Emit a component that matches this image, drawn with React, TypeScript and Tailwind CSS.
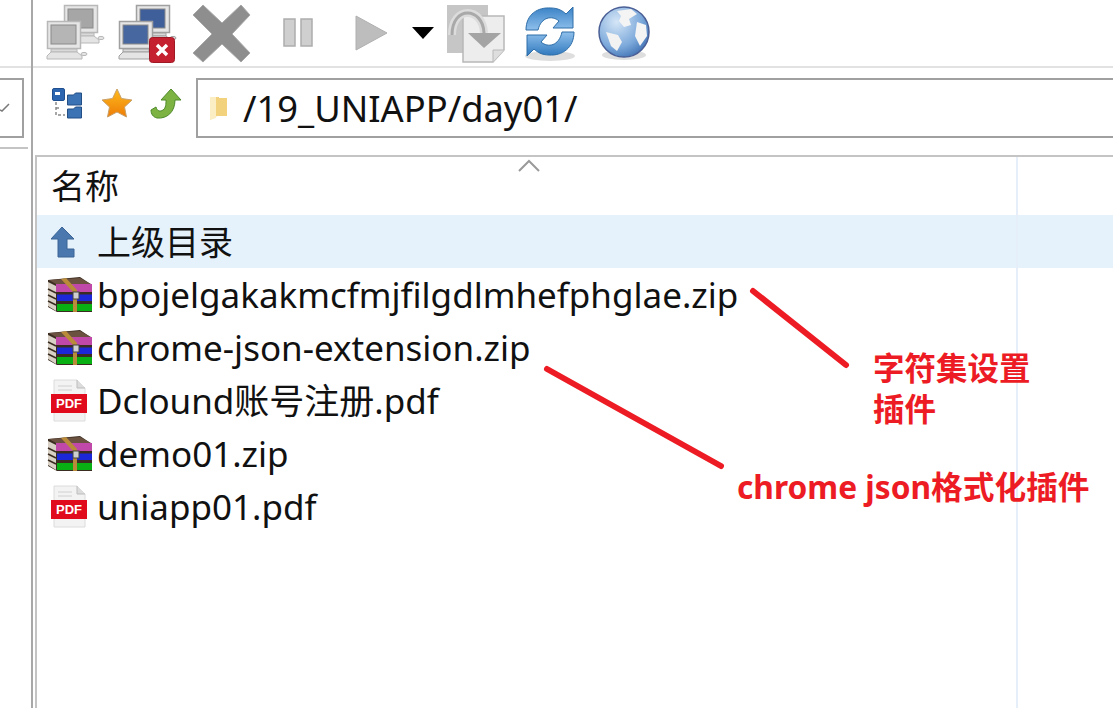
import React from 'react';

const font = "font-['Noto_Sans','Noto_Sans_CJK_SC',sans-serif]";

const Computer = ({ x, y, screen, line }: { x: number; y: number; screen: string; line: string }) => (
    <g transform={`translate(${x} ${y})`}>
        <rect x="0.5" y="0.5" width="33" height="27" fill="#e6e6e6" stroke={line} strokeWidth="1.5" />
        <rect x="4" y="4" width="25" height="19" fill={screen} stroke="#8a8a8a" />
        <path d="M4 28 h26 v3 h-26 z" fill="#d9d9d9" stroke={line} />
        <path d="M0 35 L4 31 H30 L35 35 V38 H0 Z" fill="#e4e4e4" stroke={line} />
        <ellipse cx="37" cy="33" rx="3" ry="1.6" fill="#e4e4e4" stroke={line} />
    </g>
);

const ConnectIcon = () => (
    <svg width="60" height="60" viewBox="0 0 60 60" className="shrink-0">
        <Computer x={19} y={2} screen="#a6a6a6" line="#b8b8b8" />
        <Computer x={2} y={18} screen="#b5b5b5" line="#b8b8b8" />
    </svg>
);

const DisconnectIcon = () => (
    <svg width="60" height="60" viewBox="0 0 60 60" className="shrink-0">
        <Computer x={19} y={2} screen="#3f5f9b" line="#a0a0a0" />
        <Computer x={2} y={18} screen="#46679f" line="#a0a0a0" />
        <rect x="32.5" y="34.5" width="25" height="25" rx="3" fill="#c4202f" stroke="#a11825" />
        <path d="M40 42 L50 52 M50 42 L40 52" stroke="#fff" strokeWidth="3.4" />
    </svg>
);

const CrossIcon = () => (
    <svg width="60" height="60" viewBox="0 0 60 60" className="shrink-0">
        <path d="M11 2 L30 20 L49 2 L58 12 L40 31 L58 50 L49 59 L30 41 L11 59 L1 50 L20 31 L1 12 Z" fill="#8e8e8e" stroke="#a8a8a8" />
    </svg>
);

const PauseIcon = () => (
    <svg width="30" height="30" viewBox="0 0 30 30" className="shrink-0">
        <rect x="1" y="1" width="11" height="27" fill="#cfcfcf" stroke="#adadad" strokeWidth="1.5" />
        <rect x="18" y="1" width="11" height="27" fill="#cfcfcf" stroke="#adadad" strokeWidth="1.5" />
    </svg>
);

const PlayIcon = () => (
    <svg width="34" height="38" viewBox="0 0 34 38" className="shrink-0">
        <path d="M1 2 L32 19 L1 36 Z" fill="#bdbdbd" stroke="#b0b0b0" />
    </svg>
);

const CaretIcon = () => (
    <svg width="22" height="12" viewBox="0 0 22 12" className="shrink-0">
        <path d="M0 0 H22 L11 12 Z" fill="#000" />
    </svg>
);

const PageArrowIcon = () => (
    <svg width="60" height="60" viewBox="0 0 60 60" className="shrink-0">
        <rect x="0" y="2" width="41" height="48" fill="#c6c6c6" />
        <path d="M16 13 h41 v34 l-11 12 h-30 z" fill="#ededed" stroke="#b8b8b8" strokeWidth="1.5" />
        <path d="M46 59 v-12 h11" fill="#dedede" stroke="#b8b8b8" />
        <path d="M5 32 C5 2 36 4 37 30" fill="none" stroke="#dcdcdc" strokeWidth="8" />
        <path d="M5 32 C5 2 36 4 37 30" fill="none" stroke="#a9a9a9" strokeWidth="3" />
        <path d="M21 30 H54 L37 45 Z" fill="#a4a4a4" />
    </svg>
);

const RefreshIcon = () => (
    <svg width="52" height="58" viewBox="0 0 52 58" className="shrink-0">
        <defs>
            <linearGradient id="refreshTop" x1="0" y1="0" x2="0" y2="1">
                <stop offset="0" stopColor="#3a82c6" />
                <stop offset="1" stopColor="#8fc0ec" />
            </linearGradient>
            <linearGradient id="refreshBottom" x1="0" y1="0" x2="0" y2="1">
                <stop offset="0" stopColor="#8fc0ec" />
                <stop offset="1" stopColor="#2f78bd" />
            </linearGradient>
        </defs>
        <ellipse cx="26" cy="52" rx="25" ry="5" fill="#dedede" />
        <path d="M2 26 C2 10 14 3 27 4 C34 4 39 7 42 10 L49 3 V24 H29 L35 17 C28 11 17 13 14 26 Z" fill="url(#refreshTop)" stroke="#2f6ea8" />
        <path d="M50 28 C50 44 38 52 25 51 C18 51 13 48 10 45 L3 52 V31 H23 L17 38 C24 44 35 42 38 28 Z" fill="url(#refreshBottom)" stroke="#2f6ea8" />
    </svg>
);

const GlobeIcon = () => (
    <svg width="54" height="56" viewBox="0 0 54 56" className="shrink-0">
        <defs>
            <radialGradient id="globeFill" cx="0.35" cy="0.3" r="0.85">
                <stop offset="0" stopColor="#d5e6f7" />
                <stop offset="0.6" stopColor="#7ba8da" />
                <stop offset="1" stopColor="#2f62a8" />
            </radialGradient>
        </defs>
        <ellipse cx="27" cy="50" rx="22" ry="5" fill="#dedede" />
        <circle cx="27" cy="27" r="25" fill="url(#globeFill)" stroke="#4a5f96" strokeWidth="1.5" />
        <path d="M20 6 L34 4 L40 9 L32 14 L34 20 L27 22 L22 16 L24 11 Z" fill="#f4f4f4" />
        <path d="M40 17 L49 20 L50 31 L43 41 L38 31 Z" fill="#f4f4f4" />
        <path d="M9 27 L21 30 L25 37 L20 46 L14 41 Z" fill="#f2f2f2" />
    </svg>
);

const TreeIcon = () => (
    <svg width="32" height="32" viewBox="0 0 32 32" className="shrink-0">
        <path d="M4 14 V27 H13 M4 20 H8" fill="none" stroke="#8a8a8a" strokeWidth="1.5" strokeDasharray="3 2" />
        <rect x="0.5" y="0.5" width="12" height="12" rx="1.5" fill="#2c66b0" stroke="#1f4f8f" />
        <rect x="3" y="4" width="5" height="3" fill="#fff" />
        <path d="M15.5 7 h6 l2 -2 h6 v12 h-14 z" fill="#3b73b5" stroke="#234f85" />
        <path d="M15.5 21 h6 l2 -2 h6 v11 h-14 z" fill="#3b73b5" stroke="#234f85" />
    </svg>
);

const StarIcon = () => (
    <svg width="32" height="30" viewBox="0 0 32 30" className="shrink-0">
        <defs>
            <linearGradient id="starFill" x1="0" y1="0" x2="0" y2="1">
                <stop offset="0" stopColor="#fdbb1e" />
                <stop offset="1" stopColor="#ee7c06" />
            </linearGradient>
        </defs>
        <path d="M16 1 L20.5 10.5 L31 12 L23.5 19 L25.5 29 L16 24 L6.5 29 L8.5 19 L1 12 L11.5 10.5 Z" fill="url(#starFill)" stroke="#c9a069" />
    </svg>
);

const BackIcon = () => (
    <svg width="32" height="32" viewBox="0 0 32 32" className="shrink-0">
        <path d="M21 1 L31 12 H25 C25 24 17 31 7 30 C3 29 1 26 1 22 L6 19 C7 23 10 24 13 22 C16 20 16 16 16 12 H11 Z" fill="#7cb342" stroke="#4e8a2a" />
    </svg>
);

const ChevronIcon = () => (
    <svg width="10" height="10" viewBox="0 0 10 10" className="shrink-0">
        <path d="M0 8 L2 9 L9 2" fill="none" stroke="#7a7a7a" strokeWidth="1.5" />
    </svg>
);

const FolderIcon = () => (
    <svg width="20" height="26" viewBox="0 0 20 26" className="shrink-0">
        <path d="M1 2 H10 V3 H18 V21 H8 L1 25 Z" fill="#f3d27e" />
        <path d="M1 2 H7 V23 L1 25 Z" fill="#fbeec5" />
    </svg>
);

const UpIcon = () => (
    <svg width="24" height="32" viewBox="0 0 24 32" className="shrink-0">
        <path d="M11 1 L23 13 H16 V23 H23 V31 H7 V13 H0 Z" fill="#4a78ae" stroke="#3a6496" />
    </svg>
);

const ZipIcon = () => (
    <svg width="46" height="36" viewBox="0 0 46 36" className="shrink-0">
        <path d="M1 3 L33 0 L45 8 V35 H10 L1 30 Z" fill="#3a2c20" />
        <rect x="9" y="7" width="36" height="8" fill="#c048a8" />
        <path d="M2 3 L33 1 L44 7 H9 Z" fill="#6b5140" />
        <rect x="10" y="17.5" width="35" height="6.5" fill="#1c28d8" />
        <rect x="10" y="27" width="35" height="7" fill="#08b014" />
        <path d="M1 5 L9 9 V34 L1 29 Z" fill="#d8d0c4" />
        <path d="M1 12 L9 16 M1 18 L9 22 M1 24 L9 28" stroke="#3a2c20" strokeWidth="1.5" />
        <path d="M14 2 L19 1 L30 13 V35 H26 V15 Z" fill="#b98a3a" />
        <rect x="26" y="15" width="6" height="7" fill="#cfcfcf" stroke="#444" />
    </svg>
);

const PdfIcon = () => (
    <svg width="38" height="44" viewBox="0 0 38 44" className="shrink-0">
        <path d="M3 1 H26 L34 9 V42 H3 Z" fill="#f3f3f3" stroke="#dcdcdc" />
        <path d="M26 1 V9 H34" fill="#dcdcdc" stroke="#bdbdbd" />
        <path d="M7 7 H21 M7 11 H21" stroke="#d0d0d0" />
        <rect x="0" y="15" width="36" height="19" fill="#e00b1c" />
        <text x="18" y="29" textAnchor="middle" fontSize="13" fontWeight="700" fill="#fff" fontFamily="Liberation Sans, sans-serif">PDF</text>
    </svg>
);

const rows: { name: string; icon: 'zip' | 'pdf' }[] = [
    { name: 'bpojelgakakmcfmjfilgdlmhefphglae.zip', icon: 'zip' },
    { name: 'chrome-json-extension.zip', icon: 'zip' },
    { name: 'Dclound账号注册.pdf', icon: 'pdf' },
    { name: 'demo01.zip', icon: 'zip' },
    { name: 'uniapp01.pdf', icon: 'pdf' },
];

export default function App() {
    return (
        <div className={`relative flex h-[708px] w-[1113px] overflow-hidden bg-white text-[#111] ${font}`}>
            {/* collapsed left pane */}
            <div className="flex w-[31px] shrink-0 flex-col">
                <div className="h-[68px] shrink-0 border-b-2 border-[#e2e2e2]" />
                <div className="mr-[7px] mt-[10px] flex h-[60px] shrink-0 items-center border-y-2 border-r-2 border-[#a0a0a0] pb-[2px]">
                    <ChevronIcon />
                </div>
                <div className="mr-[3px] mt-[9px] flex-1 border-t-2 border-[#c4c4c4]" />
            </div>
            <div className="w-[2px] shrink-0 bg-[#a8a8a8]" />

            <div className="flex min-w-0 flex-1 flex-col">
                {/* toolbar */}
                <div className="flex h-[68px] shrink-0 items-center border-b-2 border-[#e2e2e2] pl-[12px]">
                    <ConnectIcon />
                    <div className="ml-[12px]"><DisconnectIcon /></div>
                    <div className="ml-[15px]"><CrossIcon /></div>
                    <div className="ml-[31px]"><PauseIcon /></div>
                    <div className="ml-[42px]"><PlayIcon /></div>
                    <div className="ml-[23px]"><CaretIcon /></div>
                    <div className="ml-[13px]"><PageArrowIcon /></div>
                    <div className="ml-[17px]"><RefreshIcon /></div>
                    <div className="ml-[21px]"><GlobeIcon /></div>
                </div>

                {/* address bar */}
                <div className="flex h-[87px] shrink-0 items-start pt-[10px]">
                    <div className="ml-[19px] mt-[10px] flex items-start gap-[17px]">
                        <TreeIcon />
                        <StarIcon />
                        <BackIcon />
                    </div>
                    <div className="ml-[14px] flex h-[60px] flex-1 items-center border-y-2 border-l-2 border-[#a0a0a0] pl-[11px]">
                        <FolderIcon />
                        <span className="ml-[14px] text-[36.3px] leading-none">/19_UNIAPP/day01/</span>
                    </div>
                </div>

                {/* file list */}
                <div className="relative ml-[2px] flex min-h-0 flex-1 flex-col border-l-2 border-t-2 border-[#c4c4c4]">
                    <div className="flex h-[58px] shrink-0 items-center pl-[14px] text-[34px] leading-none">名称</div>
                    <div className="flex h-[53px] shrink-0 items-center bg-[#e5f1fb] pl-[14px] text-[34px] leading-none">
                        <UpIcon />
                        <span className="ml-[22px]">上级目录</span>
                    </div>
                    {rows.map(row => (
                        <div key={row.name} className="flex h-[53px] shrink-0 items-center text-[35px] leading-none">
                            <div className="flex w-[60px] shrink-0 justify-center pl-[5px]">
                                {row.icon === 'zip' ? <ZipIcon /> : <PdfIcon />}
                            </div>
                            <span className="whitespace-nowrap">{row.name}</span>
                        </div>
                    ))}
                    {/* column separator */}
                    <div className="absolute bottom-0 left-[979px] top-0 w-[2px] bg-[#e6eff9]" />
                </div>
            </div>

            {/* sort arrow */}
            <svg width="24" height="14" viewBox="0 0 24 14" className="absolute left-[517px] top-[159px]">
                <path d="M2 12 L12 2 L22 12" fill="none" stroke="#9a9a9a" strokeWidth="2" />
            </svg>

            {/* red annotations */}
            <svg width="1113" height="708" viewBox="0 0 1113 708" className="pointer-events-none absolute left-0 top-0">
                <line x1="753" y1="291" x2="846" y2="365" stroke="#ed1c24" strokeWidth="6" strokeLinecap="round" />
                <line x1="547" y1="369" x2="721" y2="466" stroke="#ed1c24" strokeWidth="6" strokeLinecap="round" />
            </svg>
            <div className="absolute left-[873px] top-[347px] w-[170px] text-[31.5px] font-bold leading-[41px] text-[#ed1c24]">
                字符集设置<br />插件
            </div>
            <div className="absolute left-[737px] top-[467px] whitespace-nowrap text-[31.7px] font-bold leading-[40px] text-[#ed1c24]">
                chrome json格式化插件
            </div>
        </div>
    );
}
